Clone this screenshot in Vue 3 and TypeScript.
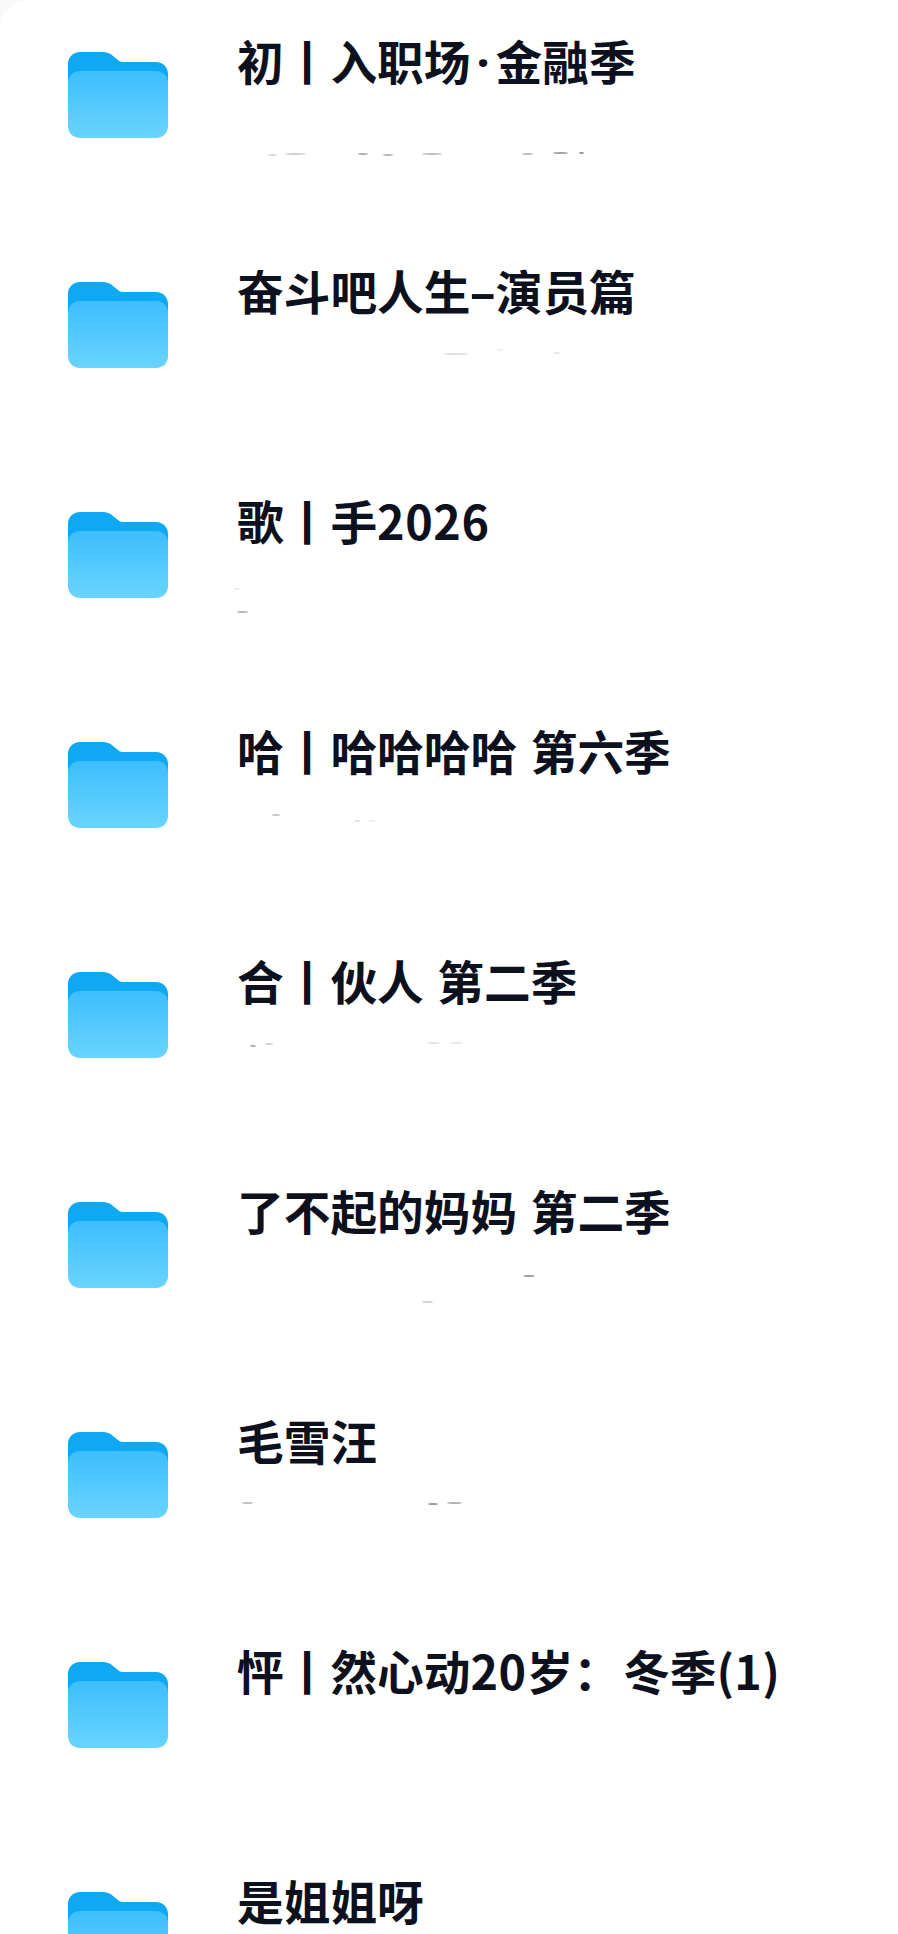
<script setup lang="ts">
interface Smudge {
  left: number
  top: number
  width: number
  shade: string
}

interface Folder {
  name: string
  smudges: Smudge[]
}

const folders: Folder[] = [
  {
    name: '初丨入职场·金融季',
    smudges: [
      { left: 31, top: 66, width: 9, shade: '#d8d8d8' },
      { left: 48, top: 65, width: 21, shade: '#d0d0d0' },
      { left: 121, top: 65, width: 10, shade: '#b0b0b0' },
      { left: 146, top: 66, width: 10, shade: '#b8b8b8' },
      { left: 185, top: 65, width: 20, shade: '#c0c0c0' },
      { left: 285, top: 65, width: 11, shade: '#c0c0c0' },
      { left: 316, top: 64, width: 15, shade: '#a0a0a0' },
      { left: 342, top: 64, width: 5, shade: '#909090' }
    ]
  },
  {
    name: '奋斗吧人生-演员篇',
    smudges: [
      { left: 206, top: 37, width: 25, shade: '#e0e0e0' },
      { left: 260, top: 33, width: 6, shade: '#f0f0f0' },
      { left: 316, top: 36, width: 7, shade: '#e8e8e8' }
    ]
  },
  {
    name: '歌丨手2026',
    smudges: [
      { left: 0, top: 65, width: 11, shade: '#b8b8b8' },
      { left: -3, top: 42, width: 6, shade: '#ececec' }
    ]
  },
  {
    name: '哈丨哈哈哈哈 第六季',
    smudges: [
      { left: 35, top: 38, width: 8, shade: '#c8c8c8' },
      { left: 118, top: 44, width: 5, shade: '#dcdcdc' },
      { left: 131, top: 44, width: 7, shade: '#f0f0f0' }
    ]
  },
  {
    name: '合丨伙人 第二季',
    smudges: [
      { left: 13, top: 39, width: 6, shade: '#a8a8a8' },
      { left: 28, top: 37, width: 8, shade: '#d0d0d0' },
      { left: 190, top: 36, width: 13, shade: '#e4e4e4' },
      { left: 213, top: 36, width: 13, shade: '#e8e8e8' }
    ]
  },
  {
    name: '了不起的妈妈 第二季',
    smudges: [
      { left: 286, top: 39, width: 12, shade: '#a0a0a0' },
      { left: 185, top: 65, width: 11, shade: '#d0d0d0' }
    ]
  },
  {
    name: '毛雪汪',
    smudges: [
      { left: 5, top: 36, width: 11, shade: '#c0c0c0' },
      { left: 191, top: 37, width: 10, shade: '#989898' },
      { left: 210, top: 36, width: 15, shade: '#b0b0b0' }
    ]
  },
  { name: '怦丨然心动20岁：冬季(1)', smudges: [] },
  { name: '是姐姐呀', smudges: [] }
]

function classFor(text: string) {
  if (text === '-') return 'dash'
  if (text === '·') return 'dot'
  if (text === '：') return 'colon'
  if (/\d/.test(text)) return 'digits'
  return ''
}

// dash, dot, colon and digits sit in different slots than the CJK font gives them
function parts(name: string) {
  return name.split(/([·\-：]|\d+)/).filter(Boolean).map((text) => ({ text, cls: classFor(text) }))
}
</script>

<template>
  <main class="list">
    <section v-for="folder in folders" :key="folder.name" class="row">
      <svg class="folder" viewBox="0 0 100 86" width="100" height="86">
        <defs>
          <linearGradient id="front" x1="0" y1="0" x2="0" y2="1">
            <stop offset="0" stop-color="#3dbefd" />
            <stop offset="1" stop-color="#69d4fe" />
          </linearGradient>
        </defs>
        <path d="M0 12C0 5 5 0 12 0H34C39 0 42 1 45 4L50 8C52 10 54 10 57 10H88C95 10 100 15 100 22V50H0Z" fill="#0fa8f2" />
        <path d="M0 31C0 24 5 19 12 19H88C95 19 100 24 100 31V74C100 81 95 86 88 86H12C5 86 0 81 0 74Z" fill="url(#front)" />
      </svg>
      <div class="text">
        <h2 class="name">
          <span v-for="(p, i) in parts(folder.name)" :key="i" :class="p.cls">{{ p.text }}</span>
        </h2>
        <div class="ghost">
          <i
            v-for="s in folder.smudges"
            :key="s.left"
            class="smudge"
            :style="{ left: s.left + 'px', top: s.top + 'px', width: s.width + 'px', background: s.shade }"
          />
        </div>
      </div>
    </section>
  </main>
</template>

<style>
html,
body {
  background: #f9f9fa;
  overflow: hidden;
}
</style>

<style scoped>
.list {
  width: 898px;
  height: 1934px;
  overflow: hidden;
  background: #fff;
  padding: 34px 0 0 68px;
  box-sizing: border-box;
  border-top-left-radius: 28px;
}

.row {
  display: flex;
  align-items: flex-start;
  height: 230px;
}

.folder {
  flex: none;
  margin-top: 18px;
}

.text {
  margin-left: 69px;
}

.name {
  margin: 0;
  font-family: "Noto Sans CJK SC", "Noto Sans", sans-serif;
  font-size: 46.7px;
  font-weight: 700;
  line-height: 52px;
  color: #0c111d;
  white-space: nowrap;
  word-spacing: 3px;
}

.dash {
  display: inline-block;
  margin: 0 4px;
  transform: scaleX(1.7);
}

.dot {
  font-family: "Noto Sans", sans-serif;
  margin: 0 6px;
}

.colon {
  margin-right: 3px;
}

.digits {
  letter-spacing: 0.6px;
}

.ghost {
  position: relative;
  height: 50px;
}

.smudge {
  position: absolute;
  height: 2px;
  border-radius: 50%;
  filter: blur(0.6px);
}
</style>
